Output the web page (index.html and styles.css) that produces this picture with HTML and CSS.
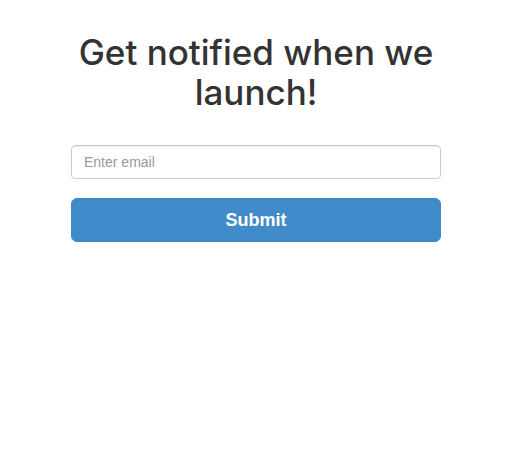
FILE: index.html
```html
<!DOCTYPE html>
<html>
<head>
<meta charset="utf-8">
<link rel="stylesheet" href="styles.css">
</head>
<body>
<main class="signup">
  <h1 class="signup-title">Get notified when we launch!</h1>
  <form class="signup-form">
    <input class="email-input" type="email" placeholder="Enter email">
    <button class="submit-btn" type="button">Submit</button>
  </form>
</main>
</body>
</html>
```

FILE: styles.css
```css
html, body {
  margin: 0;
  padding: 0;
  background: #fff;
}
body {
  font-family: "Liberation Sans", Arial, Helvetica, sans-serif;
  color: #333;
}
.signup {
  width: 370px;
  margin-left: 71px;
  padding-top: 33px;
}
.signup-title {
  margin: 0;
  font-family: Inter, "Liberation Sans", sans-serif;
  font-size: 35px;
  line-height: 39.6px;
  font-weight: 500;
  text-align: center;
  color: #333;
}
.signup-form {
  margin-top: 33px;
  display: flex;
  flex-direction: column;
  gap: 19px;
}
.email-input {
  box-sizing: border-box;
  height: 34px;
  width: 100%;
  margin: 0;
  padding: 6px 12px;
  font-family: inherit;
  font-size: 14px;
  color: #555;
  border: 1px solid #ccc;
  border-radius: 4px;
  box-shadow: inset 0 1px 1px rgba(0,0,0,0.075);
  outline: none;
}
.email-input::placeholder {
  color: #999;
}
.submit-btn {
  box-sizing: border-box;
  height: 44px;
  width: 100%;
  margin: 0;
  border: 1px solid #3f89c9;
  border-radius: 6px;
  background: #428bca;
  color: #fff;
  font-family: inherit;
  font-size: 18px;
  font-weight: bold;
  cursor: pointer;
}
```
